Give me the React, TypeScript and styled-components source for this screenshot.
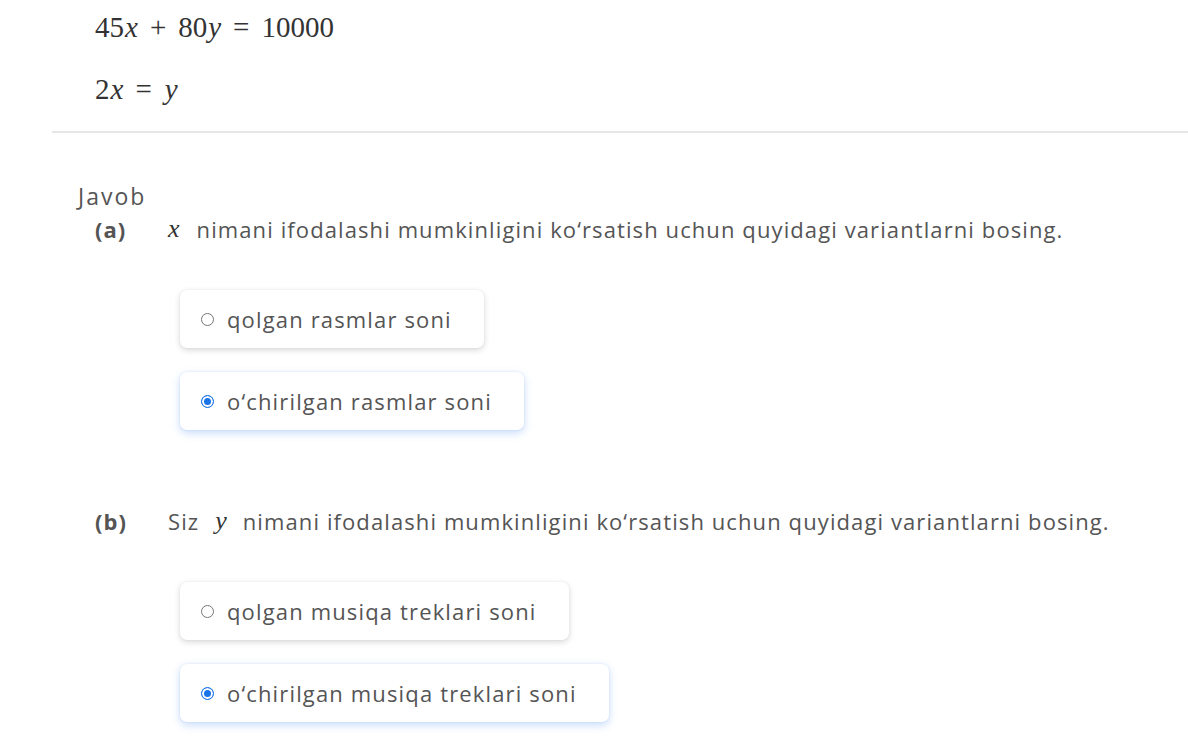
import React from "react";
import styled, { createGlobalStyle } from "styled-components";

const Global = createGlobalStyle`
  html, body { margin: 0; padding: 0; background: #ffffff; }
  body { font-family: "Open Sans", "Noto Sans", sans-serif; color: #5a5a5a; }
`;

const Page = styled.div`
  display: flex;
  flex-direction: column;
  padding-top: 9px;
  padding-bottom: 20px;
`;

const Equations = styled.div`
  display: flex;
  flex-direction: column;
  gap: 26px;
  padding-left: 95px;
`;

const MathLine = styled.div`
  font-family: "Liberation Serif", "DejaVu Serif", serif;
  font-size: 29px;
  line-height: 36px;
  color: #333;
  height: 36px;
  white-space: nowrap;
`;

const Var = styled.i`
  font-style: italic;
  margin-left: 1px;
`;

const Op = styled.span`
  margin: 0 12px;
`;

const Divider = styled.hr`
  margin: 24px 0 0 52px;
  border: none;
  border-top: 2px solid #e6e6e6;
  height: 0;
`;

const Answer = styled.div`
  display: flex;
  flex-direction: column;
  padding-top: 49px;
`;

const AnswerLabel = styled.div`
  padding-left: 78px;
  font-size: 23px;
  letter-spacing: 2px;
  line-height: 28px;
  color: #555;
`;

const Question = styled.div<{ $top: number }>`
  display: flex;
  flex-direction: column;
  margin-top: ${(p) => p.$top}px;
`;

const Prompt = styled.div`
  display: flex;
  align-items: center;
  padding-left: 95px;
  height: 32px;
  font-size: 22px;
  letter-spacing: 1.1px;
  color: #555;
  white-space: nowrap;
`;

const PartLabel = styled.span`
  width: 73px;
  font-weight: 700;
  color: #555;
  letter-spacing: 1px;
`;

const InlineVar = styled.i`
  font-family: "Liberation Serif", "DejaVu Serif", serif;
  font-style: italic;
  font-size: 26px;
  letter-spacing: 0;
  color: #333;
  margin: 0 17px 0 0;
`;

const InlineVarMid = styled(InlineVar)`
  margin: 0 16px 0 16px;
`;

const Options = styled.div`
  display: flex;
  flex-direction: column;
  align-items: flex-start;
  gap: 24px;
  padding-left: 180px;
  margin-top: 45px;
`;

const Card = styled.div<{ $selected?: boolean }>`
  display: flex;
  align-items: center;
  gap: 13px;
  height: 58px;
  box-sizing: border-box;
  padding: 0 32px 0 21px;
  background: #fff;
  border-radius: 7px;
  box-shadow: ${(p) =>
    p.$selected
      ? "0 3px 9px rgba(70, 140, 240, 0.3), 0 0 2px rgba(70, 140, 240, 0.18)"
      : "0 2px 6px rgba(0, 0, 0, 0.16), 0 0 2px rgba(0, 0, 0, 0.06)"};
  font-size: 22px;
  letter-spacing: 1.15px;
  color: #555;
  white-space: nowrap;
`;

const Radio = styled.span<{ $checked?: boolean }>`
  width: 13px;
  height: 13px;
  box-sizing: border-box;
  border-radius: 50%;
  flex: none;
  border: 1px solid ${(p) => (p.$checked ? "#1a73e8" : "#767676")};
  background: ${(p) => (p.$checked ? "#1a73e8" : "#fff")};
  box-shadow: ${(p) => (p.$checked ? "inset 0 0 0 2px #fff" : "none")};
`;

function Option({ text, selected }: { text: string; selected?: boolean }) {
  return (
    <Card $selected={selected}>
      <Radio $checked={selected} />
      <span>{text}</span>
    </Card>
  );
}

export default function App() {
  return (
    <>
      <Global />
      <Page>
        <Equations>
          <MathLine>
            45<Var>x</Var>
            <Op>+</Op>80<Var>y</Var>
            <Op>=</Op>10000
          </MathLine>
          <MathLine>
            2<Var>x</Var>
            <Op>=</Op>
            <Var>y</Var>
          </MathLine>
        </Equations>
        <Divider />
        <Answer>
          <AnswerLabel>Javob</AnswerLabel>
          <Question $top={3}>
            <Prompt>
              <PartLabel>(a)</PartLabel>
              <InlineVar>x</InlineVar>
              nimani ifodalashi mumkinligini ko‘rsatish uchun quyidagi variantlarni bosing.
            </Prompt>
            <Options>
              <Option text="qolgan rasmlar soni" />
              <Option text="o‘chirilgan rasmlar soni" selected />
            </Options>
          </Question>
          <Question $top={75}>
            <Prompt>
              <PartLabel>(b)</PartLabel>
              Siz
              <InlineVarMid>y</InlineVarMid>
              nimani ifodalashi mumkinligini ko‘rsatish uchun quyidagi variantlarni bosing.
            </Prompt>
            <Options>
              <Option text="qolgan musiqa treklari soni" />
              <Option text="o‘chirilgan musiqa treklari soni" selected />
            </Options>
          </Question>
        </Answer>
      </Page>
    </>
  );
}
